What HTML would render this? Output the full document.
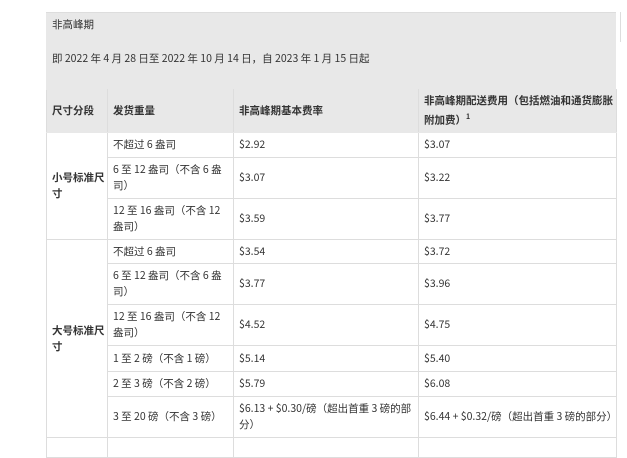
<!DOCTYPE html><html><head><meta charset="utf-8"><style>
body{margin:0;background:#fff;font-family:"Noto Sans CJK SC",sans-serif;font-size:10.5px;color:#333;}
.wrap{position:absolute;left:46px;top:12px;width:570px;}
.title{background:#e8e8e8;height:77px;border-top:1px solid #ddd;padding:0 5px;box-sizing:border-box;}
.title div{position:absolute;left:6px}
table{border-collapse:collapse;width:570px;table-layout:fixed;position:absolute;top:77px;left:0}
td,th{border:1px solid #ddd;padding:0 2px 0 5px;vertical-align:middle;line-height:16px;text-align:left;overflow:hidden}
th{background:#e8e8e8;font-weight:bold;height:42px;border-color:#e8e8e8 #ddd}
.b{font-weight:bold}
</style></head><body>
<div style="position:absolute;right:0;top:12px;width:6px;height:30px;border-left:1px solid #ddd"></div>
<div class="wrap">
<div class="title"><div style="top:5px">非高峰期</div><div style="top:39px">即 2022 年 4 月 28 日至 2022 年 10 月 14 日，自 2023 年 1 月 15 日起</div></div>
<table>
<colgroup><col style="width:61px"><col style="width:126px"><col style="width:185px"><col style="width:198px"></colgroup>
<tr><th>尺寸分段</th><th>发货重量</th><th>非高峰期基本费率</th><th>非高峰期配送费用（包括燃油和通货膨胀附加费）<sup style="font-size:7px">1</sup></th></tr>
<tr style="height:25px"><td rowspan="3" class="b">小号标准尺寸</td><td>不超过 6 盎司</td><td>$2.92</td><td>$3.07</td></tr>
<tr style="height:41px"><td>6 至 12 盎司（不含 6 盎司）</td><td>$3.07</td><td>$3.22</td></tr>
<tr style="height:41px"><td>12 至 16 盎司（不含 12 盎司）</td><td>$3.59</td><td>$3.77</td></tr>
<tr style="height:24px"><td rowspan="6" class="b">大号标准尺寸</td><td>不超过 6 盎司</td><td>$3.54</td><td>$3.72</td></tr>
<tr style="height:41px"><td>6 至 12 盎司（不含 6 盎司）</td><td>$3.77</td><td>$3.96</td></tr>
<tr style="height:41px"><td>12 至 16 盎司（不含 12 盎司）</td><td>$4.52</td><td>$4.75</td></tr>
<tr style="height:26px"><td>1 至 2 磅（不含 1 磅）</td><td>$5.14</td><td>$5.40</td></tr>
<tr style="height:25px"><td>2 至 3 磅（不含 2 磅）</td><td>$5.79</td><td>$6.08</td></tr>
<tr style="height:41px"><td>3 至 20 磅（不含 3 磅）</td><td>$6.13 + $0.30/磅（超出首重 3 磅的部分）</td><td>$6.44 + $0.32/磅（超出首重 3 磅的部分）</td></tr>
<tr style="height:20px"><td></td><td></td><td></td><td></td></tr>
</table></div>
</body></html>
